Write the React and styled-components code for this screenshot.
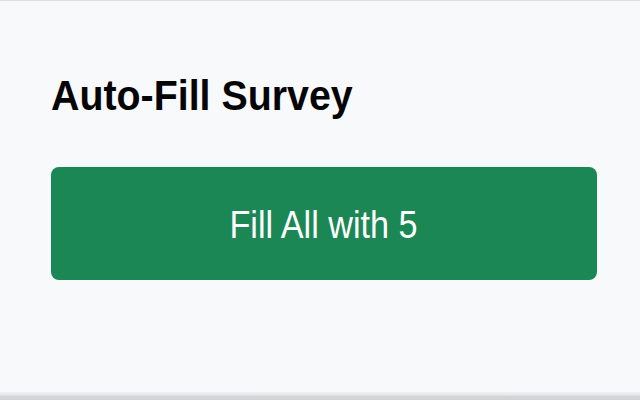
import React from "react";
import styled, { createGlobalStyle } from "styled-components";

const Global = createGlobalStyle`
  html, body { margin: 0; padding: 0; }
  body {
    width: 640px;
    height: 400px;
    overflow: hidden;
    background: #f8f9fb;
    font-family: "Liberation Sans", Arial, sans-serif;
  }
`;

const Popup = styled.div`
  box-sizing: border-box;
  width: 640px;
  height: 400px;
  display: flex;
  flex-direction: column;
  border-top: 1px solid #dfdfe7;
  background: #f8f9fb;
`;

const Content = styled.main`
  flex: 1;
  display: flex;
  flex-direction: column;
  padding: 70px 43px 0 51px;
`;

const Title = styled.h1`
  margin: 0;
  font-size: 43px;
  line-height: 48px;
  font-weight: 700;
  color: #050505;
`;

const Squeeze = styled.span`
  display: inline-block;
  transform: scaleX(${(p) => p.$scale || 0.915});
  transform-origin: ${(p) => p.$origin || "left"} center;
  white-space: nowrap;
`;

const FillButton = styled.button`
  margin-top: 48px;
  width: 546px;
  height: 113px;
  border: none;
  border-radius: 8px;
  background: #1a8754;
  color: #fff;
  font-family: "Liberation Sans", Arial, sans-serif;
  font-size: 38px;
  line-height: 38px;
  display: flex;
  align-items: center;
  justify-content: center;
  padding: 3px 0 0;
  cursor: pointer;
`;

const BottomEdge = styled.div`
  height: 8px;
  background: linear-gradient(#f1f1f6 0px, #e6e6ee 3px, #d6d6d8 4px, #d2d2d4 8px);
`;

export default function App() {
  return (
    <>
      <Global />
      <Popup>
        <Content>
          <Title>
            <Squeeze>Auto-Fill Survey</Squeeze>
          </Title>
          <FillButton>
            <Squeeze $origin="center" $scale={0.9}>Fill All with 5</Squeeze>
          </FillButton>
        </Content>
        <BottomEdge />
      </Popup>
    </>
  );
}
